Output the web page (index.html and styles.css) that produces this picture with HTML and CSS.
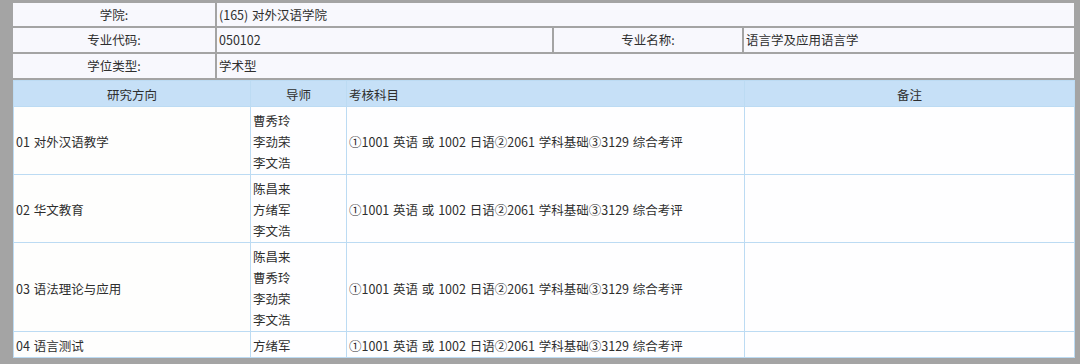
FILE: index.html
```html
<!DOCTYPE html>
<html lang="zh-CN">
<head>
<meta charset="utf-8">
<title>专业信息</title>
<link rel="stylesheet" href="styles.css">
</head>
<body>
<div class="frame">
  <div class="info">
    <div class="cell label">学院:</div>
    <div class="cell value span3">(165) 对外汉语学院</div>
    <div class="cell label">专业代码:</div>
    <div class="cell value">050102</div>
    <div class="cell label">专业名称:</div>
    <div class="cell value">语言学及应用语言学</div>
    <div class="cell label">学位类型:</div>
    <div class="cell value span3">学术型</div>
    <div class="inner-wrap">
      <table class="inner">
        <colgroup>
          <col class="c-dir">
          <col class="c-tutor">
          <col class="c-exam">
          <col class="c-note">
        </colgroup>
        <thead>
          <tr>
            <th>研究方向</th>
            <th>导师</th>
            <th class="left">考核科目</th>
            <th>备注</th>
          </tr>
        </thead>
        <tbody>
          <tr>
            <td>01 对外汉语教学</td>
            <td>曹秀玲<br>李劲荣<br>李文浩</td>
            <td>①1001 英语 或 1002 日语②2061 学科基础③3129 综合考评</td>
            <td></td>
          </tr>
          <tr>
            <td>02 华文教育</td>
            <td>陈昌来<br>方绪军<br>李文浩</td>
            <td>①1001 英语 或 1002 日语②2061 学科基础③3129 综合考评</td>
            <td></td>
          </tr>
          <tr>
            <td>03 语法理论与应用</td>
            <td>陈昌来<br>曹秀玲<br>李劲荣<br>李文浩</td>
            <td>①1001 英语 或 1002 日语②2061 学科基础③3129 综合考评</td>
            <td></td>
          </tr>
          <tr>
            <td>04 语言测试</td>
            <td>方绪军</td>
            <td>①1001 英语 或 1002 日语②2061 学科基础③3129 综合考评</td>
            <td></td>
          </tr>
        </tbody>
      </table>
    </div>
  </div>
</div>
</body>
</html>
```

FILE: styles.css
```css
* { box-sizing: border-box; }

html, body {
  margin: 0;
  padding: 0;
  background: #a4a4a4;
}

body {
  font-family: "Noto Sans CJK SC", "Noto Sans", sans-serif;
  font-size: 12.5px;
  word-spacing: 1px;
  color: #2e2e2e;
}

.frame {
  width: 1080px;
  height: 364px;
  padding: 3px 6px 0 13px;
  overflow: hidden;
}

.info {
  display: grid;
  grid-template-columns: 202px 335px 188px 330px;
  grid-template-rows: 23px 24px 24px auto;
  gap: 2px;
}

.cell {
  background: #f8f8fd;
  display: flex;
  align-items: center;
  white-space: nowrap;
  line-height: 16px;
}

.label {
  justify-content: center;
}

.value {
  padding-left: 2px;
}

.span3 {
  grid-column: span 3;
}

.inner-wrap {
  grid-column: 1 / -1;
}

.inner {
  width: 1061px;
  table-layout: fixed;
  border-collapse: collapse;
  background: #fefeff;
}

.c-dir { width: 237px; }
.c-tutor { width: 96px; }
.c-exam { width: 398px; }
.c-note { width: 330px; }

.inner th,
.inner td {
  border: 1px solid #bcdbf3;
  padding: 3px 2px 1px 2px;
  line-height: 21px;
  height: 26px;
  vertical-align: middle;
  white-space: nowrap;
  font-weight: normal;
}

.inner th {
  background: #c6e0f7;
  text-align: center;
}

.inner th.left {
  text-align: left;
}

.inner td {
  text-align: left;
}

.inner td:first-child {
  background: #fefefd;
}
```
